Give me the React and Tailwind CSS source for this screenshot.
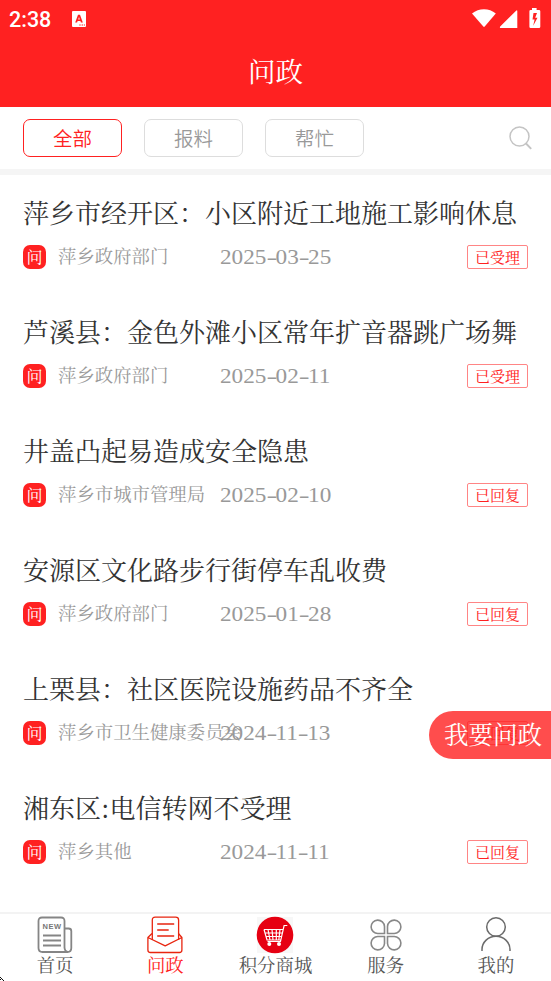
import React, { useState } from 'react';

const FILTERS = ['全部', '报料', '帮忙'];

const POSTS = [
  { title: '萍乡市经开区：小区附近工地施工影响休息', dept: '萍乡政府部门', date: '2025-03-25', status: '已受理' },
  { title: '芦溪县：金色外滩小区常年扩音器跳广场舞', dept: '萍乡政府部门', date: '2025-02-11', status: '已受理' },
  { title: '井盖凸起易造成安全隐患', dept: '萍乡市城市管理局', date: '2025-02-10', status: '已回复' },
  { title: '安源区文化路步行街停车乱收费', dept: '萍乡政府部门', date: '2025-01-28', status: '已回复' },
  { title: '上栗县：社区医院设施药品不齐全', dept: '萍乡市卫生健康委员会', date: '2024-11-13', status: '已回复' },
  { title: '湘东区:电信转网不受理', dept: '萍乡其他', date: '2024-11-11', status: '已回复' },
];

function StatusBar() {
  return (
    <div className="flex h-[37px] items-center justify-between pr-[9px] pl-[9px] text-white">
      <div className="flex items-center">
        <span className="w-[63px] pt-[2px] font-['Roboto',sans-serif] text-[21.5px] leading-none font-medium">2:38</span>
        <svg width="14" height="16" viewBox="0 0 14 16">
          <rect width="14" height="16" rx="1" fill="#fff" />
          <path d="M3.200 11.500 6 3.800h2l2.800 7.700H8.900L8.400 10H5.600l-.5 1.500zM6.200 8.500h1.600L7 6z" fill="#ff2121" />
          <path d="M7.300 13.500h1.400v1H7.300zM9.600 13.500H11v1H9.600zM11.800 13.500H13v1h-1.200z" fill="#ff2121" />
        </svg>
      </div>
      <svg className="mr-px" width="70" height="22" viewBox="0 0 70 22" fill="#fff">
        <path d="M1 5.600C7.800-.1 18.200-.1 24.800 5.600L13.700 18.600Q13 19.400 12.300 18.600z" />
        <path d="M46.300 3.300Q46.300 1.600 45.100 2.800L29.200 18.500Q28.300 20 29.800 20H46.300z" />
        <path fillRule="evenodd" d="M61 0h4.600v2H68q1.300 0 1.300 1.300v15.400q0 1.300-1.300 1.300h-8.400q-1.200 0-1.200-1.300V3.300Q58.400 2 59.600 2H61zM62.500 5l-1 6.500h2.100L62.200 17.800l4.300-8h-2.300l1.800-4.800z" />
      </svg>
    </div>
  );
}

function PostRow({ post }) {
  return (
    <li className="h-[119px] px-[23px] pt-5">
      <h2 className="h-[37px] text-[26px] leading-[34px] font-normal whitespace-nowrap text-[#333]">{post.title}</h2>
      <div className="mt-[13px] flex h-6 items-center text-[#999]">
        <span className="h-6 w-[23px] shrink-0 rounded-[7px] bg-[#ff2121] text-center text-[16px] leading-[23px] text-white">问</span>
        <span className="ml-[12px] h-6 w-[161.5px] shrink-0 text-[18.4px] leading-[21px] whitespace-nowrap">{post.dept}</span>
        <span className="h-6 origin-left scale-x-[1.08] font-['Liberation_Serif',serif] text-[21.5px] leading-[24px]">
          {post.date.split('-').map((part, i) => (
            <React.Fragment key={i}>
              {i > 0 && <span className="mr-[1.500px] inline-block w-[7px] origin-left scale-x-[1.4]">-</span>}
              {part}
            </React.Fragment>
          ))}
        </span>
        <span className="ml-auto h-6 w-[61px] rounded-[2px] border border-[#ff8585] text-center text-[15px] leading-[21px] text-[#ff2121]">
          {post.status}
        </span>
      </div>
    </li>
  );
}

function NewsIcon() {
  return (
    <svg width="36" height="38" viewBox="0 0 36 38" fill="none" stroke="#858585" strokeWidth="1.800">
      <path d="M27.500 32V5q0-3.500-3.500-3.500H5Q1.500 1.500 1.500 5v27q0 4 4 4h25q3.800 0 3.800-4V15q0-2.500-2.800-2.500h-4M27.500 31q0 4 3 4.800" />
      <path d="M6 19.500h18M6 24.500h18M6 29.500h18" />
      <text x="5.500" y="13.300" textLength="18.500" fill="#777" stroke="none" fontSize="7.500" fontWeight="bold" fontFamily="Liberation Sans, sans-serif">NEW</text>
    </svg>
  );
}

function MailIcon() {
  return (
    <svg width="36" height="38" viewBox="0 0 36 38" fill="none" stroke="#e8250f" strokeWidth="1.300" strokeLinejoin="round">
      <path d="M5.300 24V4q0-2.800 2.800-2.800h20.500q3 0 3 2.800v20" />
      <path d="M5 17.500.900 21.500V34q0 2.500 2.500 2.500h29q2.500 0 2.500-2.500V21.500l-3.500-4M.900 21.500l17.300 8.300 16.700-8.300" />
      <path d="M10.200 8h17M10.200 14h11.500M10.200 20h17" />
    </svg>
  );
}

function CartIcon() {
  return (
    <svg width="38" height="38" viewBox="0 0 38 38" fill="none" stroke="#fff">
      <rect x="1" y="1" width="36" height="36" fill="#f7f7f7" stroke="none" />
      <circle cx="19" cy="19" r="18.300" fill="#e60012" stroke="none" />
      <path d="M31.300 9.500h-3.200L24.500 25.500H11.500M8 13.500h19.200M8 13.500l3 10.500h13.800M9 17h17.400M10 20.500h15.500M12 13.500l2 10.500M16 13.500l1 10.500M20.300 13.500v10.500M24 13.500l-1.200 10.500" strokeWidth="1.200" />
      <circle cx="13.300" cy="28" r="2" fill="#fff" stroke="none" />
      <circle cx="23" cy="28" r="2" fill="#fff" stroke="none" />
    </svg>
  );
}

function ServiceIcon() {
  return (
    <svg width="32" height="38" viewBox="0 0 32 38" fill="none" stroke="#888" strokeWidth="1.600">
      <path d="M14.500 17.500H8A6.700 6.700 0 1 1 14.500 10.500z" />
      <path d="M17.500 17.500H24A6.700 6.700 0 1 0 17.500 10.500z" />
      <path d="M14.500 20.500H8A6.700 6.700 0 1 0 14.500 27.500z" />
      <path d="M17.500 20.500H24A6.700 6.700 0 1 1 17.500 27.500z" />
    </svg>
  );
}

function ProfileIcon() {
  return (
    <svg width="32" height="38" viewBox="0 0 32 38" fill="none" stroke="#6b6b6b" strokeWidth="1.500">
      <circle cx="16" cy="11" r="9.300" />
      <path d="M2 35V33.500a14 13.300 0 0 1 28 0V35" />
    </svg>
  );
}

const TABS = [
  { label: '首页', icon: NewsIcon },
  { label: '问政', icon: MailIcon, active: true },
  { label: '积分商城', icon: CartIcon },
  { label: '服务', icon: ServiceIcon },
  { label: '我的', icon: ProfileIcon },
];

export default function App() {
  const [filter, setFilter] = useState('全部');

  return (
    <div className="relative flex h-[981px] w-[551px] flex-col overflow-hidden bg-white font-['Noto_Serif_CJK_SC','Noto_Sans_CJK_SC',serif]">
      <header className="h-[107px] shrink-0 bg-[#ff2121]">
        <StatusBar />
        <h1 className="text-center text-[27.500px] leading-[66px] font-normal text-white">问政</h1>
      </header>

      <div className="flex h-[68px] shrink-0 items-center border-b-[6px] border-[#f5f5f5] px-[23px]">
        <div className="flex gap-[22px] font-['Noto_Sans_CJK_SC',sans-serif] font-[350]">
          {FILTERS.map((f) => (
            <button
              key={f}
              onClick={() => setFilter(f)}
              className={`h-[38px] w-[99px] rounded-[7px] border text-[19.500px] leading-[36px] ${
                f === filter ? 'border-[#ff2121] text-[#ff2121]' : 'border-[#ddd] text-[#999]'
              }`}
            >
              {f}
            </button>
          ))}
        </div>
        <svg className="ml-auto -mr-[5px]" width="24" height="24" viewBox="0 0 24 24" fill="none" stroke="#c4c4c4" strokeWidth="1.500">
          <circle cx="10.500" cy="10.500" r="9.500" />
          <path d="m16.500 17 5.700 5.800" strokeWidth="1.900" />
        </svg>
      </div>

      <ul className="flex-1">
        {POSTS.map((post) => (
          <PostRow key={post.title} post={post} />
        ))}
      </ul>

      <nav className="grid h-[69px] shrink-0 grid-cols-5 border-t-2 border-[#f3f3f3]">
        {TABS.map(({ label, icon: Icon, active }) => (
          <button key={label} className={`flex flex-col items-center pt-[2px] ${active ? 'text-[#ff2121]' : 'text-[#555]'}`}>
            <Icon />
            <span className="text-[18.4px] leading-[20px]">{label}</span>
          </button>
        ))}
      </nav>

      <button className="absolute top-[711px] right-0 flex h-12 w-[122px] rounded-l-full bg-[#ff2121]/80 pl-[15px] text-left text-[24.5px] leading-[46px] whitespace-nowrap text-white">
        我要问政
      </button>
      <svg className="absolute bottom-0 left-0" width="4" height="4" viewBox="0 0 4 4">
        <path d="M0 0h1v1H0zM1 1h1v1H1zM2 2h1v1H2zM3 3h1v1H3zM0 2h1v1H0z" fill="#111" />
      </svg>
    </div>
  );
}
